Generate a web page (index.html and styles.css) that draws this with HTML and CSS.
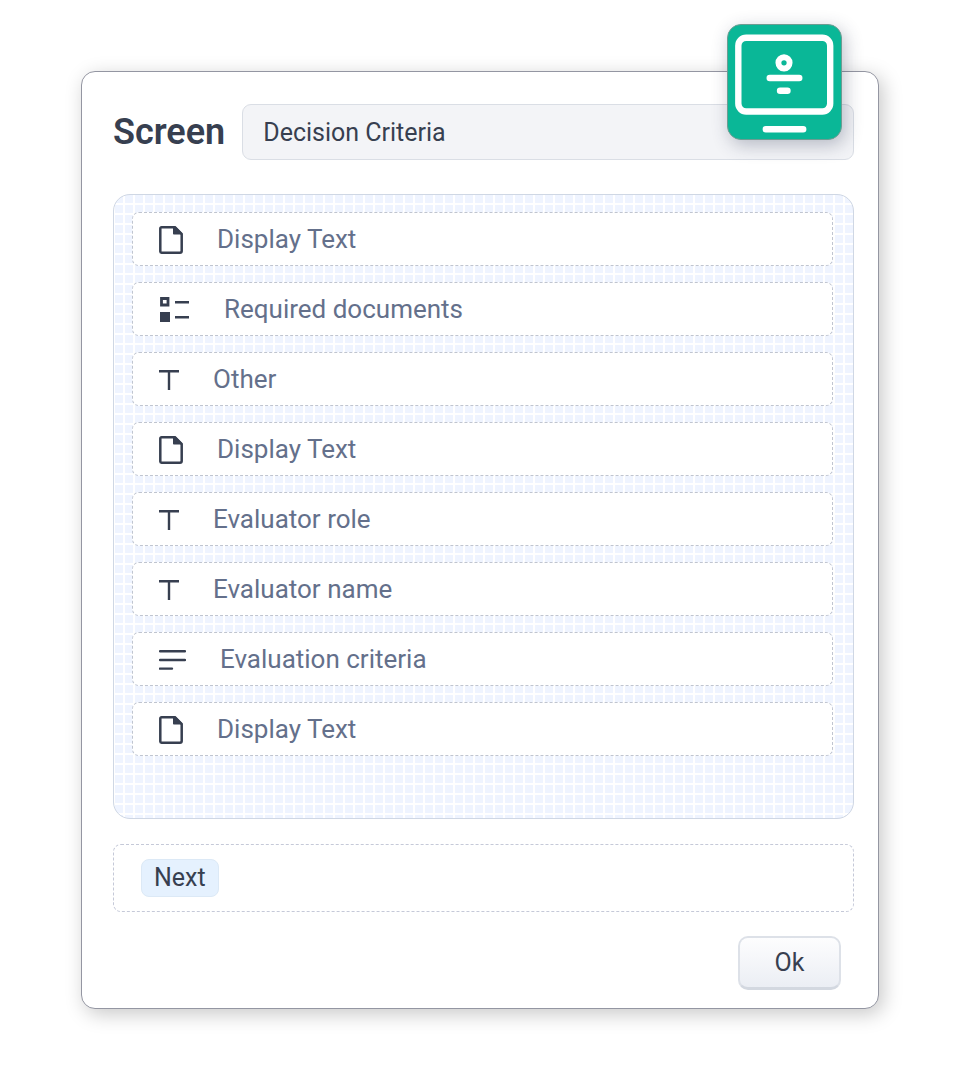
FILE: index.html
```html
<!DOCTYPE html>
<html lang="en">

<head>
    <meta charset="utf-8">
    <title>Decision Criteria</title>
    <link rel="stylesheet" href="styles.css">
</head>

<body>
    <svg class="sprite" width="0" height="0" aria-hidden="true">
        <symbol id="icon-page" viewBox="0 0 24 28">
            <path d="M2.5 1.3H16L22.7 8v17a1.7 1.7 0 0 1-1.7 1.7H2.5a1.2 1.2 0 0 1-1.2-1.2V2.5a1.2 1.2 0 0 1 1.2-1.2z" fill="none" stroke="#373f50" stroke-width="2.5" />
            <path d="M14 1h3l6 6v1.5h-8.2a.8.8 0 0 1-.8-.8z" fill="#373f50" />
        </symbol>
        <symbol id="icon-text" viewBox="0 0 20 20">
            <path d="M0 1.2h20M10 1v19" fill="none" stroke="#373f50" stroke-width="2.4" />
        </symbol>
    </svg>

    <form class="dialog">
        <svg class="badge" viewBox="0 0 115 116" aria-hidden="true">
            <rect x="10.5" y="13" width="93.5" height="75" rx="8" fill="none" stroke="#fff" stroke-width="6.5" />
            <circle cx="57" cy="38.5" r="5.7" fill="none" stroke="#fff" stroke-width="6" />
            <path d="M42.5 54h30M53 67h7.500M38.500 106h38" stroke="#fff" stroke-width="6.6" stroke-linecap="round" />
        </svg>

        <div class="header">
            <label for="screen-name">Screen</label>
            <input type="text" id="screen-name" value="Decision Criteria">
        </div>

        <div class="canvas">
            <div class="field">
                <svg width="24" height="28"><use href="#icon-page" /></svg>
                <span>Display Text</span>
            </div>
            <div class="field">
                <svg width="31" height="26" viewBox="0 0 31 26">
                    <path d="M2.5 1.5H9V8H2.5z" fill="none" stroke="#373f50" stroke-width="2.8" />
                    <path d="M1 15h10v10H1zM16 4h14v2.4H16zM16 19h14v2.4H16z" fill="#373f50" />
                </svg>
                <span>Required documents</span>
            </div>
            <div class="field">
                <svg width="20" height="20"><use href="#icon-text" /></svg>
                <span>Other</span>
            </div>
            <div class="field">
                <svg width="24" height="28"><use href="#icon-page" /></svg>
                <span>Display Text</span>
            </div>
            <div class="field">
                <svg width="20" height="20"><use href="#icon-text" /></svg>
                <span>Evaluator role</span>
            </div>
            <div class="field">
                <svg width="20" height="20"><use href="#icon-text" /></svg>
                <span>Evaluator name</span>
            </div>
            <div class="field">
                <svg width="27" height="20" viewBox="0 0 27 20">
                    <path d="M1 1.2h25M1 10h25M1 18.6h12" stroke="#373f50" stroke-width="2.4" stroke-linecap="round" />
                </svg>
                <span>Evaluation criteria</span>
            </div>
            <div class="field">
                <svg width="24" height="28"><use href="#icon-page" /></svg>
                <span>Display Text</span>
            </div>
        </div>

        <div class="actions">
            <button type="button" class="next-button">Next</button>
        </div>

        <div class="footer">
            <button type="button" class="ok-button">Ok</button>
        </div>
    </form>
</body>

</html>
```
FILE: styles.css
```css
* {
    box-sizing: border-box;
}

body {
    margin: 0;
    padding: 71px 79px 71px 81px;
    background-color: white;
    color: #373f50;
    font-family: Roboto, sans-serif;
}

.sprite {
    position: absolute;
}

.dialog {
    position: relative;
    padding: 32px 24px 18px 31px;
    border: 1px solid #9496a2;
    border-radius: 14px;
    background-color: white;
    box-shadow: 4px 5px 20px rgba(0, 0, 0, 0.22);
}

.badge {
    position: absolute;
    top: -48px;
    right: 36px;
    width: 115px;
    height: 116px;
    border: 1px solid #6d9c92;
    border-radius: 14px;
    background-color: #0ab797;
    box-shadow: 3px 5px 18px rgba(40, 50, 80, 0.3);
}

.header {
    display: flex;
    align-items: center;
    gap: 17px;
}

.header label {
    font-size: 36px;
    font-weight: 600;
}

.header input {
    flex: 1;
    min-width: 0;
    height: 56px;
    padding: 0 20px;
    border: 1px solid #dadee5;
    border-radius: 9px;
    background-color: #f3f4f7;
    color: #373f50;
    font-family: inherit;
    font-size: 25px;
}

.canvas {
    display: flex;
    flex-direction: column;
    gap: 16px;
    margin-top: 34px;
    padding: 17px 20px 62px 18px;
    border: 1px solid #cfd7e4;
    border-radius: 17px;
    background-color: #eff4ff;
    background-image:
        linear-gradient(to right, white 2px, transparent 2px),
        linear-gradient(to bottom, white 2px, transparent 2px);
    background-size: 10px 10px;
    background-position: 9px 8px;
}

.field {
    display: flex;
    align-items: center;
    gap: 34px;
    height: 54px;
    padding-left: 26px;
    border: 1px dashed #c0c5d0;
    border-radius: 7px;
    background-color: white;
    color: #64708b;
    font-size: 26px;
}

.field svg {
    margin-top: 2px;
}

.actions {
    margin-top: 25px;
    padding: 14px 27px;
    border: 1px dashed #c5c9d8;
    border-radius: 8px;
}

.next-button {
    display: block;
    height: 38px;
    padding: 0 12px;
    border: 1px solid #dce9f6;
    border-radius: 8px;
    background-color: #e5f1fe;
    color: #373f50;
    font-family: inherit;
    font-size: 25px;
    line-height: 30px;
}

.footer {
    display: flex;
    justify-content: flex-end;
    margin-top: 24px;
    padding-right: 13px;
}

.ok-button {
    width: 103px;
    height: 54px;
    border: 2px solid #dde1e8;
    border-bottom: 3px solid #d3d8e0;
    border-radius: 10px;
    background: linear-gradient(#fdfdfe, #ebeef4);
    color: #373f50;
    font-family: inherit;
    font-size: 25px;
}
```
